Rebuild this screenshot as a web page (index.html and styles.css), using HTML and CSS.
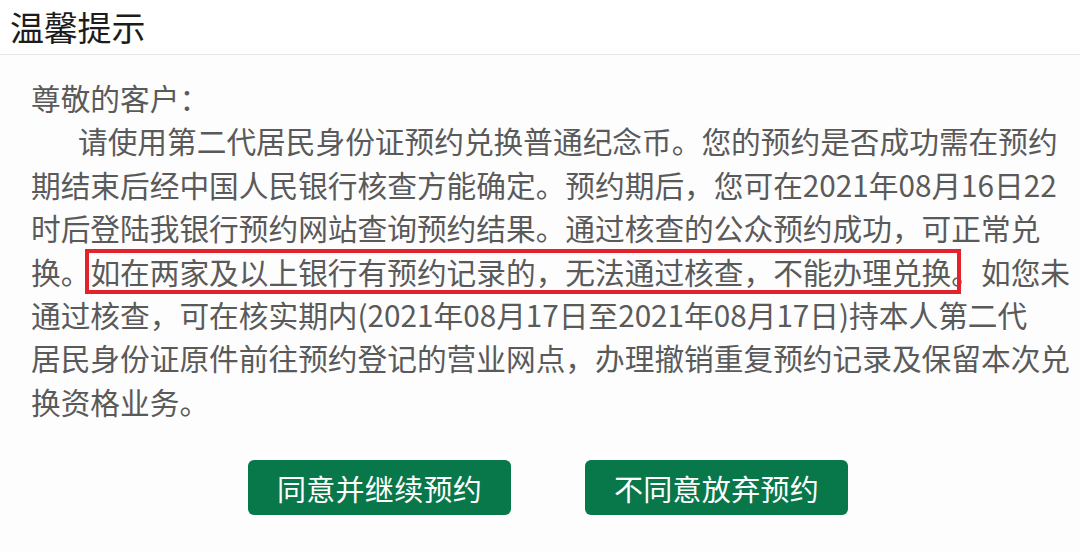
FILE: index.html
```html
<!DOCTYPE html>
<html lang="zh-CN">
<head>
<meta charset="utf-8">
<title>温馨提示</title>
<link rel="stylesheet" href="styles.css">
</head>
<body>
<div class="dialog">
  <div class="dialog-header">
    <h1 class="dialog-title">温馨提示</h1>
  </div>
  <div class="dialog-body">
    <p class="greeting">尊敬的客户：</p>
    <p class="notice"><span class="indent">请使用第二代居民身份证预约兑换普通纪念币。您的预约是否成功需在预约</span><br>期结束后经中国人民银行核查方能确定。预约期后，您可在2021年08月16日22<br>时后登陆我银行预约网站查询预约结果。通过核查的公众预约成功，可正常兑<br>换。<span class="highlight">如在两家及以上银行有预约记录的，无法通过核查，不能办理兑换</span>。如您未<br>通过核查，可在核实期内(2021年08月17日至2021年08月17日)持本人第二代<br>居民身份证原件前往预约登记的营业网点，办理撤销重复预约记录及保留本次兑<br>换资格业务。</p>
  </div>
  <div class="dialog-actions">
    <button class="btn">同意并继续预约</button>
    <button class="btn">不同意放弃预约</button>
  </div>
</div>
</body>
</html>
```
FILE: styles.css
```css
html, body {
  margin: 0;
  padding: 0;
  background: #ffffff;
}

body {
  font-family: "Noto Sans CJK SC", "Noto Sans", sans-serif;
}

.dialog {
  width: 1080px;
  height: 551px;
  overflow: hidden;
  background: #fdfdfd;
}

.dialog-header {
  height: 54px;
  display: flex;
  align-items: center;
  padding-left: 10px;
  border-bottom: 1px solid #e6e6e6;
  background: #ffffff;
}

.dialog-title {
  margin: 0;
  font-size: 34px;
  font-weight: normal;
  line-height: 54px;
  color: #1c1c1c;
  letter-spacing: -0.2px;
}

.dialog-body {
  padding: 21px 0 0 31px;
  color: #5a5a5a;
  font-size: 29.7px;
  line-height: 43.4px;
}

.dialog-body p {
  margin: 0;
  white-space: nowrap;
}

.indent {
  padding-left: 47px;
}

.highlight {
  outline: 4px solid #e3222c;
  outline-offset: -3px;
  padding: 0 9px 0 4px;
  margin: 0 -9px 0 -4px;
}

.dialog-actions {
  display: flex;
  justify-content: center;
  gap: 74px;
  padding-left: 16px;
  margin-top: 37px;
}

.btn {
  width: 263px;
  height: 55px;
  border: none;
  border-radius: 6px;
  background: #08774a;
  color: #ffffff;
  font-family: "Noto Sans CJK SC", "Noto Sans", sans-serif;
  font-size: 29px;
  padding: 0;
  letter-spacing: 0.3px;
}
```
